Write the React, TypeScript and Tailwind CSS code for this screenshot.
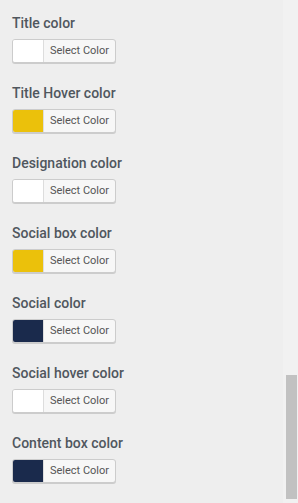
const rows = [
  { label: 'Title color', color: '#ffffff' },
  { label: 'Title Hover color', color: '#ebc10b' },
  { label: 'Designation color', color: '#ffffff' },
  { label: 'Social box color', color: '#ebc10b' },
  { label: 'Social color', color: '#1a2a4c' },
  { label: 'Social hover color', color: '#ffffff' },
  { label: 'Content box color', color: '#1a2a4c' },
];

function ColorPicker({ label, color }: { label: string; color: string }) {
  return (
    <div className="flex flex-col">
      <div className="text-[14px] leading-5 font-medium text-[#50575e]">{label}</div>
      <button
        type="button"
        className="mt-[6px] flex h-[24px] w-[104px] overflow-hidden rounded-[3px] border border-[#cccccc] bg-[#f7f7f7] shadow-[0_1px_0_#cccccc]"
      >
        <span className="h-full w-[31px] border-r border-[#dddddd]" style={{ backgroundColor: color }} />
        <span className="flex flex-1 items-center justify-center text-[11px] text-[#555555]">Select Color</span>
      </button>
    </div>
  );
}

export default function App() {
  return (
    <div className="flex h-[503px] w-[298px] bg-[#eeeeee] font-['Roboto',sans-serif]">
      <div className="flex flex-1 flex-col gap-[20px] pl-3 pt-[13px]">
        {rows.map((r) => (
          <ColorPicker key={r.label} label={r.label} color={r.color} />
        ))}
      </div>
      {/* fake scrollbar */}
      <div className="flex w-[15px] flex-col bg-[#f1f1f1] pt-[375px] pl-[3px] pr-[1px] pb-[4px]">
        <div className="flex-1 bg-[#c1c1c1]" />
      </div>
    </div>
  );
}
